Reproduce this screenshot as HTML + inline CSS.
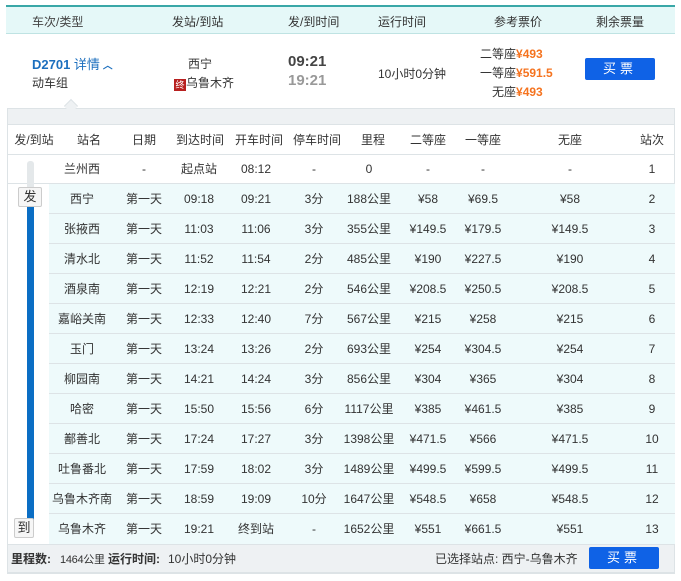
<!DOCTYPE html>
<html><head><meta charset="utf-8"><style>
*{margin:0;padding:0;box-sizing:border-box}
body{width:681px;height:581px;background:#fff;font-family:"Liberation Sans","Noto Sans CJK SC",sans-serif;font-size:12px;color:#333;position:relative;overflow:hidden}
.a{position:absolute;white-space:nowrap}
.hdr{left:6px;top:5px;width:669px;height:29px;background:#e5f8f8;border-top:2px solid #3aa7a7;border-bottom:1px solid #bfe3e3}
.o{color:#f5731f;font-weight:bold}
.btn{background:#0f62e6;color:#fff;border-radius:2px;text-align:center;font-size:13px;letter-spacing:4px}
.row{position:absolute;left:7px;width:668px;height:30px;line-height:30px;border-bottom:1px solid #dde3e6}
.row span{position:absolute;transform:translateX(-50%);white-space:nowrap}
.hl{background:#eefafb}
</style></head><body>
<div class="a hdr"></div>
<div class="a" style="left:32px;top:13px;color:#444">车次/类型</div>
<div class="a" style="left:172px;top:13px">发站/到站</div>
<div class="a" style="left:288px;top:13px">发/到时间</div>
<div class="a" style="left:378px;top:13px">运行时间</div>
<div class="a" style="left:494px;top:13px">参考票价</div>
<div class="a" style="left:596px;top:13px">剩余票量</div>

<div class="a" style="left:32px;top:54px;color:#1c6fbe;font-weight:bold;font-size:13px">D2701 <span style="font-weight:normal">详情</span><span style="font-size:10px"> ︿</span></div>
<div class="a" style="left:32px;top:74px">动车组</div>
<div class="a" style="left:188px;top:55px">西宁</div>
<div class="a" style="left:174px;top:74px"><span style="display:inline-block;width:12px;height:12px;background:#b8201f;color:#fff;font-size:9px;line-height:12px;text-align:center;vertical-align:-1px">终</span>乌鲁木齐</div>
<div class="a" style="left:288px;top:53px;font-weight:bold;font-size:15px;color:#444">09:21</div>
<div class="a" style="left:288px;top:72px;font-weight:bold;font-size:15px;color:#999">19:21</div>
<div class="a" style="left:378px;top:65px">10小时0分钟</div>
<div class="a" style="left:480px;top:45px">二等座<span class="o">¥493</span></div>
<div class="a" style="left:480px;top:64px">一等座<span class="o">¥591.5</span></div>
<div class="a" style="left:492px;top:83px">无座<span class="o">¥493</span></div>
<div class="a btn" style="left:585px;top:58px;width:70px;height:22px;line-height:22px">买票</div>

<div class="a" style="left:7px;top:108px;width:668px;height:466px;border:1px solid #dde3e6;background:#fff"></div>
<div class="a" style="left:8px;top:109px;width:666px;height:16px;background:#eef1f3;border-bottom:1px solid #dde3e6"></div>
<div class="a" style="left:66px;top:101px;width:10px;height:10px;background:#eef1f3;border-left:1px solid #dde3e6;border-top:1px solid #dde3e6;transform:rotate(45deg)"></div>

<div class="row" style="top:125px"><span style="left:27px">发/到站</span><span style="left:82px">站名</span><span style="left:137px">日期</span><span style="left:193px">到达时间</span><span style="left:252px">开车时间</span><span style="left:310px">停车时间</span><span style="left:366px">里程</span><span style="left:421px">二等座</span><span style="left:476px">一等座</span><span style="left:563px">无座</span><span style="left:645px">站次</span></div>

<div class="row" style="top:154px"><span style="left:75px">兰州西</span><span style="left:137px">-</span><span style="left:192px">起点站</span><span style="left:249px">08:12</span><span style="left:307px">-</span><span style="left:362px">0</span><span style="left:421px">-</span><span style="left:476px">-</span><span style="left:563px">-</span><span style="left:645px">1</span></div>
<div class="row hl" style="top:184px;left:49px;width:626px"><span style="left:33px">西宁</span><span style="left:95px">第一天</span><span style="left:150px">09:18</span><span style="left:207px">09:21</span><span style="left:265px">3分</span><span style="left:320px">188公里</span><span style="left:379px">¥58</span><span style="left:434px">¥69.5</span><span style="left:521px">¥58</span><span style="left:603px">2</span></div>
<div class="row hl" style="top:214px;left:49px;width:626px"><span style="left:33px">张掖西</span><span style="left:95px">第一天</span><span style="left:150px">11:03</span><span style="left:207px">11:06</span><span style="left:265px">3分</span><span style="left:320px">355公里</span><span style="left:379px">¥149.5</span><span style="left:434px">¥179.5</span><span style="left:521px">¥149.5</span><span style="left:603px">3</span></div>
<div class="row hl" style="top:244px;left:49px;width:626px"><span style="left:33px">清水北</span><span style="left:95px">第一天</span><span style="left:150px">11:52</span><span style="left:207px">11:54</span><span style="left:265px">2分</span><span style="left:320px">485公里</span><span style="left:379px">¥190</span><span style="left:434px">¥227.5</span><span style="left:521px">¥190</span><span style="left:603px">4</span></div>
<div class="row hl" style="top:274px;left:49px;width:626px"><span style="left:33px">酒泉南</span><span style="left:95px">第一天</span><span style="left:150px">12:19</span><span style="left:207px">12:21</span><span style="left:265px">2分</span><span style="left:320px">546公里</span><span style="left:379px">¥208.5</span><span style="left:434px">¥250.5</span><span style="left:521px">¥208.5</span><span style="left:603px">5</span></div>
<div class="row hl" style="top:304px;left:49px;width:626px"><span style="left:33px">嘉峪关南</span><span style="left:95px">第一天</span><span style="left:150px">12:33</span><span style="left:207px">12:40</span><span style="left:265px">7分</span><span style="left:320px">567公里</span><span style="left:379px">¥215</span><span style="left:434px">¥258</span><span style="left:521px">¥215</span><span style="left:603px">6</span></div>
<div class="row hl" style="top:334px;left:49px;width:626px"><span style="left:33px">玉门</span><span style="left:95px">第一天</span><span style="left:150px">13:24</span><span style="left:207px">13:26</span><span style="left:265px">2分</span><span style="left:320px">693公里</span><span style="left:379px">¥254</span><span style="left:434px">¥304.5</span><span style="left:521px">¥254</span><span style="left:603px">7</span></div>
<div class="row hl" style="top:364px;left:49px;width:626px"><span style="left:33px">柳园南</span><span style="left:95px">第一天</span><span style="left:150px">14:21</span><span style="left:207px">14:24</span><span style="left:265px">3分</span><span style="left:320px">856公里</span><span style="left:379px">¥304</span><span style="left:434px">¥365</span><span style="left:521px">¥304</span><span style="left:603px">8</span></div>
<div class="row hl" style="top:394px;left:49px;width:626px"><span style="left:33px">哈密</span><span style="left:95px">第一天</span><span style="left:150px">15:50</span><span style="left:207px">15:56</span><span style="left:265px">6分</span><span style="left:320px">1117公里</span><span style="left:379px">¥385</span><span style="left:434px">¥461.5</span><span style="left:521px">¥385</span><span style="left:603px">9</span></div>
<div class="row hl" style="top:424px;left:49px;width:626px"><span style="left:33px">鄯善北</span><span style="left:95px">第一天</span><span style="left:150px">17:24</span><span style="left:207px">17:27</span><span style="left:265px">3分</span><span style="left:320px">1398公里</span><span style="left:379px">¥471.5</span><span style="left:434px">¥566</span><span style="left:521px">¥471.5</span><span style="left:603px">10</span></div>
<div class="row hl" style="top:454px;left:49px;width:626px"><span style="left:33px">吐鲁番北</span><span style="left:95px">第一天</span><span style="left:150px">17:59</span><span style="left:207px">18:02</span><span style="left:265px">3分</span><span style="left:320px">1489公里</span><span style="left:379px">¥499.5</span><span style="left:434px">¥599.5</span><span style="left:521px">¥499.5</span><span style="left:603px">11</span></div>
<div class="row hl" style="top:484px;left:49px;width:626px"><span style="left:33px">乌鲁木齐南</span><span style="left:95px">第一天</span><span style="left:150px">18:59</span><span style="left:207px">19:09</span><span style="left:265px">10分</span><span style="left:320px">1647公里</span><span style="left:379px">¥548.5</span><span style="left:434px">¥658</span><span style="left:521px">¥548.5</span><span style="left:603px">12</span></div>
<div class="row hl" style="top:514px;left:49px;width:626px;border-bottom:none"><span style="left:33px">乌鲁木齐</span><span style="left:95px">第一天</span><span style="left:150px">19:21</span><span style="left:207px">终到站</span><span style="left:265px">-</span><span style="left:320px">1652公里</span><span style="left:379px">¥551</span><span style="left:434px">¥661.5</span><span style="left:521px">¥551</span><span style="left:603px">13</span></div>

<div class="a" style="left:27px;top:161px;width:7px;height:40px;background:#e4e8ea;border-radius:3px"></div>
<div class="a" style="left:27px;top:200px;width:7px;height:328px;background:#0b6ec4"></div>
<div class="a" style="left:18px;top:187px;width:24px;height:20px;background:#f6f6f6;border:1px solid #ccc;border-radius:2px;text-align:center;line-height:18px;font-size:13px">发</div>
<div class="a" style="left:14px;top:518px;width:20px;height:20px;background:#f6f6f6;border:1px solid #ccc;border-radius:2px;text-align:center;line-height:18px;font-size:13px">到</div>

<div class="a" style="left:7px;top:544px;width:668px;height:29px;background:#eef1f3;border:1px solid #dde3e6"></div>
<div class="a" style="left:11px;top:550px"><b>里程数:</b></div>
<div class="a" style="left:60px;top:551px;font-size:11px;letter-spacing:-0.3px">1464公里</div>
<div class="a" style="left:108px;top:550px"><b>运行时间:</b></div>
<div class="a" style="left:168px;top:550px">10小时0分钟</div>
<div class="a" style="left:435px;top:550px">已选择站点: 西宁-乌鲁木齐</div>
<div class="a btn" style="left:589px;top:547px;width:70px;height:22px;line-height:22px">买票</div>
</body></html>
